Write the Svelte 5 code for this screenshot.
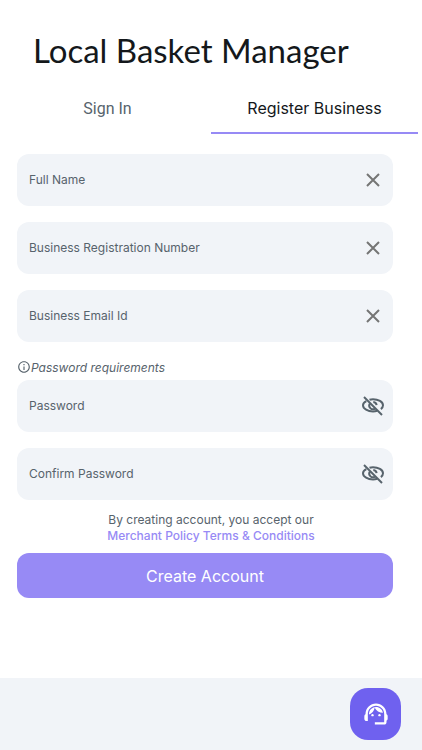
<script lang="ts">
	interface Field {
		id: string;
		label: string;
		type: string;
	}

	const details: Field[] = [
		{ id: 'full-name', label: 'Full Name', type: 'text' },
		{ id: 'registration', label: 'Business Registration Number', type: 'text' },
		{ id: 'email', label: 'Business Email Id', type: 'email' }
	];
	const secrets: Field[] = [
		{ id: 'password', label: 'Password', type: 'password' },
		{ id: 'confirm', label: 'Confirm Password', type: 'password' }
	];

	let values = $state<Record<string, string>>({});
	let shown = $state<Record<string, boolean>>({});
	let tab = $state('register');
</script>

<div class="page">
	<main>
		<h1>Local Basket Manager</h1>

		<div class="tabs" role="tablist">
			<button
				class="tab"
				class:active={tab === 'signin'}
				role="tab"
				aria-selected={tab === 'signin'}
				onclick={() => (tab = 'signin')}>Sign In</button
			>
			<button
				class="tab"
				class:active={tab === 'register'}
				role="tab"
				aria-selected={tab === 'register'}
				onclick={() => (tab = 'register')}>Register Business</button
			>
		</div>

		<form onsubmit={(e) => e.preventDefault()}>
			<div class="group">
				{#each details as field (field.id)}
					<div class="field">
						<input
							id={field.id}
							type={field.type}
							placeholder={field.label}
							aria-label={field.label}
							bind:value={values[field.id]}
						/>
						<button
							class="icon"
							type="button"
							aria-label="Clear {field.label}"
							onclick={() => (values[field.id] = '')}
						>
							<svg width="24" height="24" viewBox="0 0 24 24">
								<path class="cross" d="M6 6 18 18M18 6 6 18" />
							</svg>
						</button>
					</div>
				{/each}
			</div>

			<button class="hint" type="button">
				<svg width="14" height="14" viewBox="0 0 24 24">
					<path
						d="M11 7h2v2h-2zm0 4h2v6h-2zm1-9C6.48 2 2 6.48 2 12s4.48 10 10 10 10-4.48 10-10S17.52 2 12 2zm0 18c-4.41 0-8-3.59-8-8s3.59-8 8-8 8 3.59 8 8-3.59 8-8 8z"
					/>
				</svg>
				<span>Password requirements</span>
			</button>

			<div class="group">
				{#each secrets as field (field.id)}
					<div class="field">
						<input
							id={field.id}
							type={shown[field.id] ? 'text' : field.type}
							placeholder={field.label}
							aria-label={field.label}
							bind:value={values[field.id]}
						/>
						<button
							class="icon"
							type="button"
							aria-label="Show {field.label}"
							onclick={() => (shown[field.id] = !shown[field.id])}
						>
							<svg class="eye" width="24" height="24" viewBox="0 0 24 24">
								<path d="M8.5 5.8C9.6 5.4 10.8 5.2 12 5.200c5.200 0 10 2.600 10 6.100 0 1.500-.8 2.800-2.100 3.800" />
								<path d="M5.300 7.200C3.300 8.300 2 9.700 2 11.300c0 3.500 4.800 6.100 10 6.100 1.500 0 2.900-.2 4.200-.6" />
								<path d="M8.900 9.600a3.600 3.600 0 0 0 5 5M12.300 7.900a3.600 3.600 0 0 1 3.300 3.300" />
								<path d="M3 3 21 21" />
							</svg>
						</button>
					</div>
				{/each}
			</div>

			<p class="terms">
				By creating account, you accept our<br />
				<a href="#terms">Merchant Policy Terms &amp; Conditions</a>
			</p>

			<button class="submit" type="submit">Create Account</button>
		</form>
	</main>

	<footer>
		<button class="support" aria-label="Contact support">
			<svg width="28" height="28" viewBox="0 0 24 24">
				<path
					d="M21 12.22C21 6.73 16.74 3 12 3c-4.69 0-9 3.65-9 9.28-.6.34-1 .98-1 1.72v2c0 1.100.9 2 2 2h1v-6.100c0-3.870 3.130-7 7-7s7 3.130 7 7V19h-8v2h8c1.100 0 2-.9 2-2v-1.220c.590-.310 1-.920 1-1.640v-2.300c0-.700-.410-1.310-1-1.620z"
				/>
				<circle cx="9" cy="13" r="1" />
				<circle cx="15" cy="13" r="1" />
				<path
					d="M18 11.03C17.52 8.18 15.04 6 12.05 6c-3.03 0-6.29 2.51-6.03 6.45 2.47-1.01 4.33-3.21 4.86-5.89 1.31 2.63 4 4.44 7.12 4.47z"
				/>
			</svg>
		</button>
	</footer>
</div>

<style>
	:global(body) {
		margin: 0;
		background: #fff;
	}
	.page {
		display: flex;
		flex-direction: column;
		min-height: 100vh;
		font-family: Inter, 'Liberation Sans', sans-serif;
		color: #57636c;
	}
	main {
		flex: 1;
	}
	button {
		padding: 0;
		border: 0;
		background: none;
		font: inherit;
		color: inherit;
		cursor: pointer;
	}
	h1 {
		margin: 0;
		padding: 29px 33px 0;
		font-family: Lato, sans-serif;
		font-size: 33px;
		font-weight: 400;
		line-height: 42px;
		color: #14181b;
	}
	.tabs {
		display: flex;
		margin: 13px 4px 0;
	}
	.tab {
		flex: 1;
		height: 50px;
		border-bottom: 2px solid transparent;
		font-family: Roboto, sans-serif;
		font-size: 16px;
	}
	.tab.active {
		border-color: #978af5;
		font-family: Inter, sans-serif;
		color: #14181b;
	}
	form {
		display: flex;
		flex-direction: column;
		padding: 20px 29px 0 17px;
	}
	.group {
		display: flex;
		flex-direction: column;
		gap: 16px;
	}
	.field {
		display: flex;
		align-items: center;
		height: 52px;
		padding: 0 8px 0 12px;
		border-radius: 12px;
		background: #f1f4f8;
	}
	input {
		flex: 1;
		min-width: 0;
		padding: 0 0 2px;
		border: 0;
		outline: 0;
		background: none;
		font: inherit;
		font-size: 12px;
		color: #14181b;
	}
	input::placeholder {
		color: #57636c;
		opacity: 1;
	}
	.icon {
		display: flex;
	}
	.cross {
		fill: none;
		stroke: #757575;
		stroke-width: 2;
	}
	.eye {
		fill: none;
		stroke: #57636c;
		stroke-width: 2;
	}
	.hint {
		display: flex;
		align-items: center;
		align-self: flex-start;
		height: 18px;
		margin: 16px 0 4px;
		font-size: 12px;
		font-style: italic;
	}
	.hint svg {
		fill: #57636c;
	}
	.terms {
		margin: 12px -12px 9px 0;
		font-size: 12px;
		line-height: 16px;
		text-align: center;
	}
	a {
		color: #978af5;
		font-weight: 500;
		text-decoration: none;
	}
	.submit {
		height: 45px;
		border-radius: 12px;
		background: #978af5;
		font-size: 16px;
		color: #fff;
	}
	footer {
		display: flex;
		justify-content: flex-end;
		padding: 10px 21px;
		background: #f1f4f8;
	}
	.support {
		display: flex;
		align-items: center;
		justify-content: center;
		width: 51px;
		height: 52px;
		border-radius: 18px;
		background: #6f61ef;
	}
	.support svg {
		fill: #fff;
	}
</style>
